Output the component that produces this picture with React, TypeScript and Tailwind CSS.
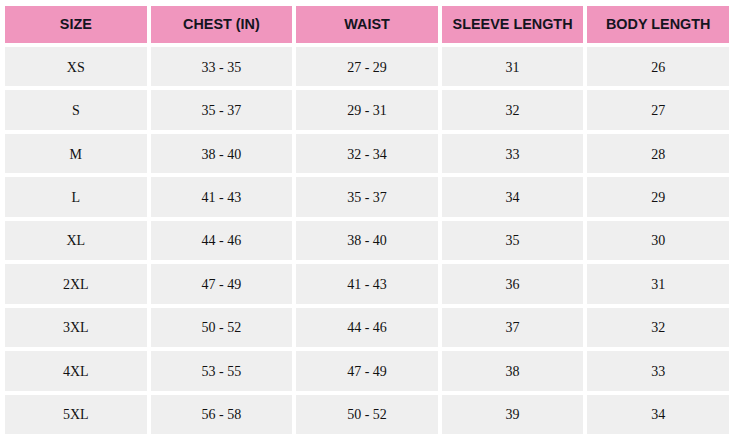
import React from "react";

const headers = ["SIZE", "CHEST (IN)", "WAIST", "SLEEVE LENGTH", "BODY LENGTH"];
const rows: string[][] = [
  ["XS", "33 - 35", "27 - 29", "31", "26"],
  ["S", "35 - 37", "29 - 31", "32", "27"],
  ["M", "38 - 40", "32 - 34", "33", "28"],
  ["L", "41 - 43", "35 - 37", "34", "29"],
  ["XL", "44 - 46", "38 - 40", "35", "30"],
  ["2XL", "47 - 49", "41 - 43", "36", "31"],
  ["3XL", "50 - 52", "44 - 46", "37", "32"],
  ["4XL", "53 - 55", "47 - 49", "38", "33"],
  ["5XL", "56 - 58", "50 - 52", "39", "34"],
];

export default function App() {
  return (
    <div className="w-[736px] h-[443px] bg-white pl-[5px] pt-[6px]">
      <div className="w-[724px] h-[428px] grid grid-cols-5 grid-rows-[37px_repeat(9,1fr)] gap-[4px]">
        {headers.map((h) => (
          <div
            key={h}
            className="bg-[#f096be] flex items-center justify-center text-[14.4px] font-bold text-[#141420] font-['Liberation_Sans',Arial,sans-serif]"
          >
            {h}
          </div>
        ))}
        {rows.map((r) =>
          r.map((c, i) => (
            <div
              key={r[0] + i}
              className="bg-[#efefef] flex items-center justify-center pt-[1px] text-[14px] text-[#111] font-['Liberation_Serif','Times_New_Roman',serif]"
            >
              {c}
            </div>
          ))
        )}
      </div>
    </div>
  );
}
